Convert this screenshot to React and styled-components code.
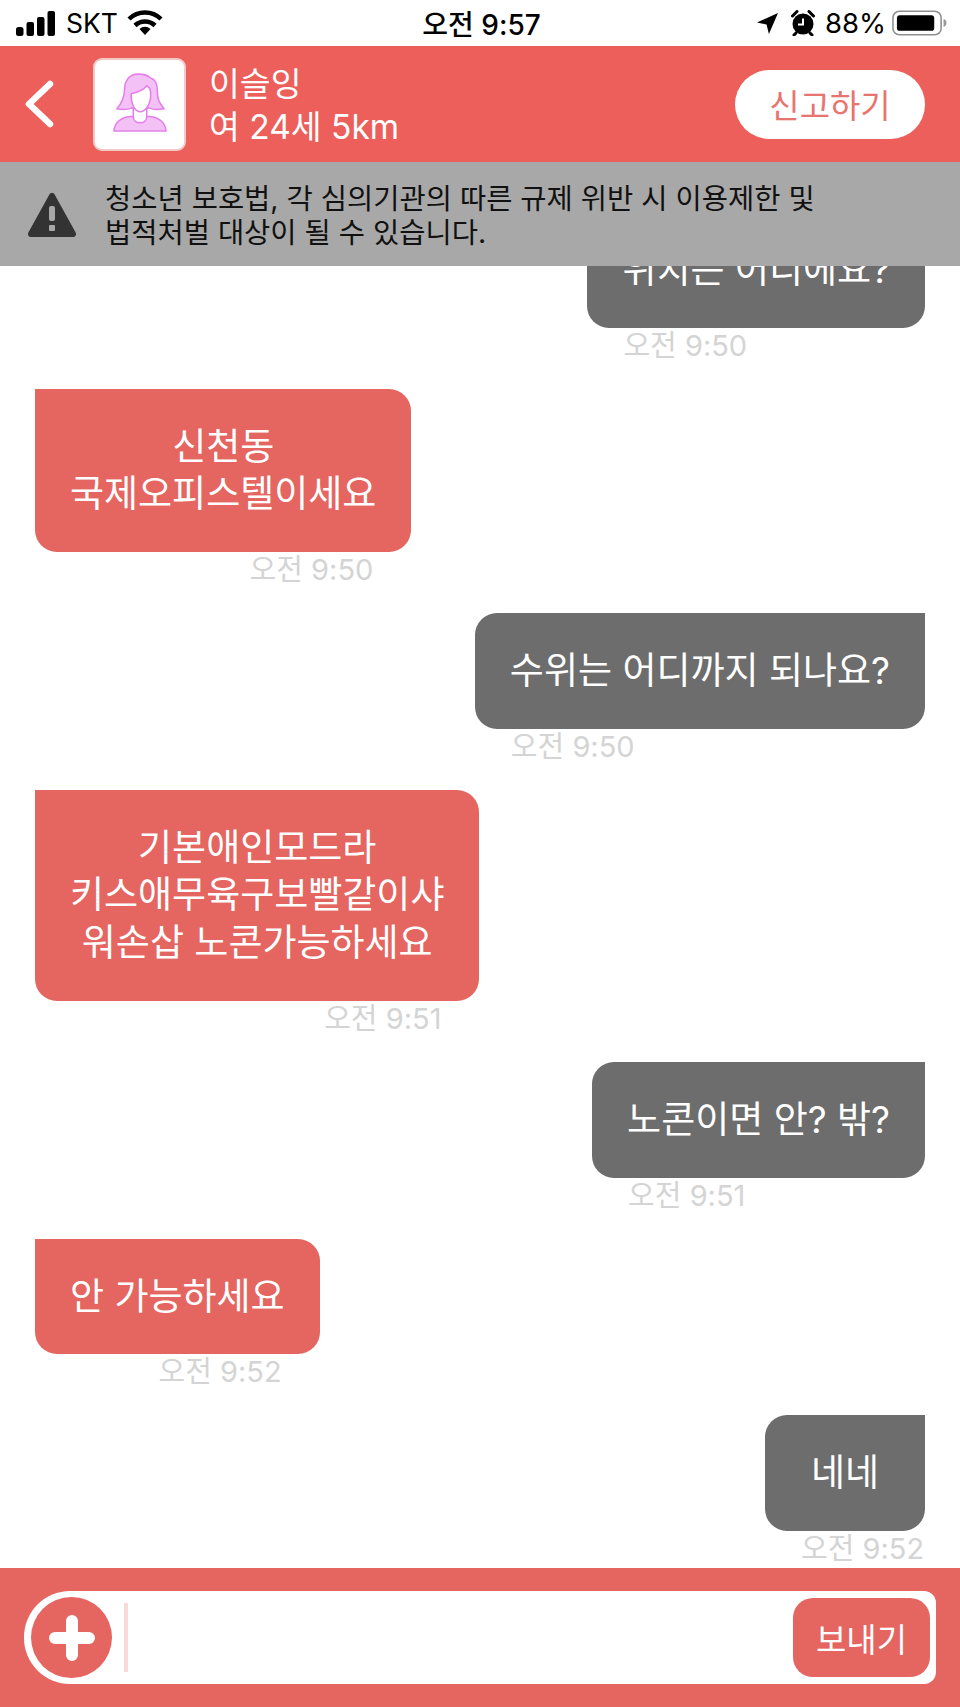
import React from "react";
import styled, { createGlobalStyle } from "styled-components";

const FONT = `Inter, "Noto Sans CJK KR", sans-serif`;

const Global = createGlobalStyle`
  html, body {
    margin: 0;
    padding: 0;
    background: #fff;
  }
  * {
    box-sizing: border-box;
  }
`;

const Page = styled.div`
  width: 960px;
  height: 1707px;
  display: flex;
  flex-direction: column;
  font-family: ${FONT};
  background: #fff;
  overflow: hidden;
`;

const StatusBar = styled.div`
  height: 46px;
  flex: none;
  display: grid;
  grid-template-columns: 1fr auto 1fr;
  align-items: center;
  padding: 0 13px 0 16px;
  color: #000;
`;

const StatusLeft = styled.div`
  display: flex;
  align-items: center;
  gap: 11px;
`;

const StatusRight = styled.div`
  display: flex;
  align-items: center;
  justify-content: flex-end;
  gap: 10px;
`;

const Carrier = styled.span`
  font-size: 26.5px;
  font-weight: 400;
  margin-right: -2px;
`;

const Clock = styled.span`
  font-size: 28px;
  font-weight: 500;
`;

const Percent = styled.span`
  font-size: 27.5px;
  font-weight: 400;
  margin-right: -4px;
`;

const Header = styled.div`
  height: 116px;
  flex: none;
  display: flex;
  align-items: center;
  background: #ec5f5b;
  padding: 0 35px 0 24px;
`;

const BackIcon = styled.svg`
  width: 30px;
  height: 50px;
  flex: none;
  margin-right: 39px;
`;

const Avatar = styled.div`
  width: 93px;
  height: 93px;
  flex: none;
  display: flex;
  align-items: center;
  justify-content: center;
  background: #fff;
  border: 2px solid #f3c9c6;
  border-radius: 9px;
  margin-right: 23px;
`;

const Profile = styled.div`
  flex: 1;
  color: #fff;
  font-size: 33.5px;
  line-height: 43px;
  padding-top: 3px;
`;

const ReportButton = styled.div`
  width: 190px;
  height: 69px;
  display: flex;
  align-items: center;
  justify-content: center;
  background: #fff;
  border-radius: 35px;
  color: #e87470;
  font-size: 33px;
`;

const Notice = styled.div`
  height: 104px;
  flex: none;
  display: flex;
  align-items: center;
  background: #a8a8a8;
  padding: 4px 0 0 27px;
  color: #111;
  font-size: 28.5px;
  line-height: 34px;
`;

const NoticeIcon = styled.svg`
  width: 50px;
  height: 48px;
  flex: none;
  margin-right: 28px;
`;

const Messages = styled.div`
  flex: 1;
  min-height: 0;
  display: flex;
  flex-direction: column;
  justify-content: flex-end;
  gap: 25px;
  overflow: hidden;
  padding: 0 35px 1px;
`;

const Row = styled.div`
  flex: none;
  display: flex;
  flex-direction: column;
  align-items: ${(p) => (p.$mine ? "flex-end" : "flex-start")};
`;

const Bubble = styled.div`
  min-width: 160px;
  background: ${(p) => (p.$mine ? "#6d6d6d" : "#e56560")};
  border-radius: ${(p) => (p.$mine ? "22px 0 22px 22px" : "0 22px 22px 22px")};
  color: #fff;
  padding: 34px 35px;
  font-size: 37px;
  line-height: 47.7px;
  text-align: center;
  white-space: nowrap;
`;

const Stamp = styled.div`
  height: 36px;
  flex: none;
  color: #d4d4d4;
  font-size: 29px;
  line-height: 36px;
  white-space: nowrap;
`;

// the stamp sits under the bubble text and must not widen the bubble
const StampWrap = styled.div`
  display: flex;
  justify-content: ${(p) => (p.$mine ? "flex-start" : "flex-end")};
  padding: ${(p) => (p.$mine ? "0 0 0 36px" : "0 38px 0 0")};
  width: 0;
  min-width: 100%;
`;

const BubbleBox = styled.div`
  display: flex;
  flex-direction: column;
`;

const Footer = styled.div`
  height: 139px;
  flex: none;
  background: #e56560;
  padding: 23px 24px;
`;

const InputBar = styled.div`
  height: 93px;
  display: flex;
  align-items: center;
  background: #fff;
  border-radius: 46px 12px 12px 46px;
  padding: 0 6px 0 7px;
`;

const PlusButton = styled.div`
  width: 81px;
  height: 81px;
  flex: none;
  border-radius: 50%;
  background: #e56560;
  display: flex;
  align-items: center;
  justify-content: center;
`;

const Caret = styled.div`
  width: 4px;
  height: 69px;
  flex: none;
  margin-left: 12px;
  background: #f9d8d8;
`;

const SendButton = styled.div`
  width: 137px;
  height: 79px;
  margin-left: auto;
  display: flex;
  align-items: center;
  justify-content: center;
  background: #e56560;
  border-radius: 20px;
  color: #fff;
  font-size: 33px;
`;

const chats = [
  { mine: true, lines: ["위치는 어디에요?"], time: "오전 9:50" },
  { mine: false, lines: ["신천동", "국제오피스텔이세요"], time: "오전 9:50" },
  { mine: true, lines: ["수위는 어디까지 되나요?"], time: "오전 9:50" },
  { mine: false, lines: ["기본애인모드라", "키스애무육구보빨같이샤", "워손삽 노콘가능하세요"], time: "오전 9:51" },
  { mine: true, lines: ["노콘이면 안? 밖?"], time: "오전 9:51" },
  { mine: false, lines: ["안 가능하세요"], time: "오전 9:52" },
  { mine: true, lines: ["네네"], time: "오전 9:52" },
];

const Signal = () => (
  <svg width="39" height="25" viewBox="0 0 39 25">
    <rect x="0" y="16" width="7.5" height="9" rx="2.5" fill="#000" />
    <rect x="10.5" y="11" width="7.5" height="14" rx="2" fill="#000" />
    <rect x="21" y="6" width="7.5" height="19" rx="2" fill="#000" />
    <rect x="31.5" y="0" width="7.5" height="25" rx="2" fill="#000" />
  </svg>
);

const Wifi = () => (
  <svg width="36" height="26" viewBox="0 0 36 26">
    <path d="M18 25l-5.5-6a8 8 0 0 1 11 0z" fill="#000" />
    <path d="M2 9a23 23 0 0 1 32 0M8 15.5a14.5 14.5 0 0 1 20 0" fill="none" stroke="#000" strokeWidth="4.5" />
  </svg>
);

const LocationArrow = () => (
  <svg width="21" height="21" viewBox="0 0 22 22" style={{ marginRight: 3 }}>
    <path d="M22 0L12.5 22 10 12 0 10z" fill="#000" />
  </svg>
);

const Alarm = () => (
  <svg width="24" height="26" viewBox="0 0 24 26">
    <circle cx="12" cy="14" r="10.5" fill="#000" />
    <path d="M1.5 6l4.500-4.500M22.500 6L18 1.5M5 23l-2 2M19 23l2 2" stroke="#000" strokeWidth="3" strokeLinecap="round" />
    <path d="M12 8.500v6H7" fill="none" stroke="#fff" strokeWidth="2" />
  </svg>
);

const Battery = () => (
  <svg width="55" height="26" viewBox="0 0 56 26">
    <rect x="1" y="1" width="49" height="24" rx="6.5" fill="none" stroke="#8f8f8f" strokeWidth="1.6" />
    <rect x="5" y="5" width="38" height="16" rx="3" fill="#000" />
    <path d="M52.500 9c2 .6 3 2 3 4s-1 3.400-3 4z" fill="#9a9a9a" />
  </svg>
);

const WomanIcon = () => (
  <svg width="54" height="62" viewBox="0 0 56 64">
    <path d="M1 60c1-10 8-14 17-15h20c9 1 16 5 17 15z" fill="#f4c1f7" stroke="#e57fec" strokeWidth="1.6" strokeLinejoin="round" />
    <path d="M21 36v9c0 4 3 6.500 7 6.500s7-2.500 7-6.500v-9z" fill="#fff" stroke="#e57fec" strokeWidth="1.6" />
    <path d="M26 1c-9 0-14 7-14 16 0 8-2 13-8 20 5 1 11 1 16-1h17c5 2 11 2 16 1-5-6-7-10-7-18 0-9-3-13-7-14-3-3-8-4-13-4z" fill="#f4c1f7" stroke="#e57fec" strokeWidth="1.6" strokeLinejoin="round" />
    <path d="M35 13c-4 5-9 7-16 8-1 9 3 19 9 19s12-9 11-20c0-3-1-5-4-7z" fill="#fff" stroke="#e57fec" strokeWidth="1.6" strokeLinejoin="round" />
  </svg>
);

export default function App() {
  return (
    <Page>
      <Global />
      <StatusBar>
        <StatusLeft>
          <Signal />
          <Carrier>SKT</Carrier>
          <Wifi />
        </StatusLeft>
        <Clock>오전 9:57</Clock>
        <StatusRight>
          <LocationArrow />
          <Alarm />
          <Percent>88%</Percent>
          <Battery />
        </StatusRight>
      </StatusBar>

      <Header>
        <BackIcon viewBox="0 0 30 50">
          <path d="M26 5L5 25l21 20" fill="none" stroke="#fff" strokeWidth="6.5" strokeLinecap="round" strokeLinejoin="round" />
        </BackIcon>
        <Avatar>
          <WomanIcon />
        </Avatar>
        <Profile>
          이슬잉
          <br />
          여 24세 5km
        </Profile>
        <ReportButton>신고하기</ReportButton>
      </Header>

      <Notice>
        <NoticeIcon viewBox="0 0 50 48">
          <path d="M25 4L46 42H4z" fill="#333" stroke="#333" strokeWidth="6" strokeLinejoin="round" />
          <rect x="22" y="14" width="6" height="15" rx="2" fill="#a8a8a8" />
          <rect x="22" y="33" width="6" height="6" rx="1" fill="#a8a8a8" />
        </NoticeIcon>
        <div>
          청소년 보호법, 각 심의기관의 따른 규제 위반 시 이용제한 및
          <br />
          법적처벌 대상이 될 수 있습니다.
        </div>
      </Notice>

      <Messages>
        {chats.map((c, i) => (
          <Row key={i} $mine={c.mine}>
            <BubbleBox>
              <Bubble $mine={c.mine}>
                {c.lines.map((l, j) => (
                  <div key={j}>{l}</div>
                ))}
              </Bubble>
              <StampWrap $mine={c.mine}>
                <Stamp>{c.time}</Stamp>
              </StampWrap>
            </BubbleBox>
          </Row>
        ))}
      </Messages>

      <Footer>
        <InputBar>
          <PlusButton>
            <svg width="50" height="50" viewBox="0 0 50 50">
              <path d="M25 8v34M8 25h34" stroke="#fff" strokeWidth="12" strokeLinecap="round" />
            </svg>
          </PlusButton>
          <Caret />
          <SendButton>보내기</SendButton>
        </InputBar>
      </Footer>
    </Page>
  );
}
